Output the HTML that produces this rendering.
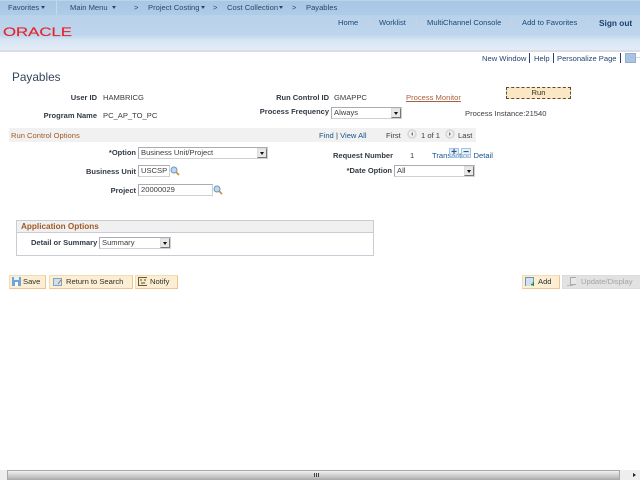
<!DOCTYPE html>
<html><head><meta charset="utf-8"><style>
html,body{margin:0;padding:0;width:640px;height:480px;overflow:hidden;background:#fff}
#p{position:relative;width:640px;height:480px;overflow:hidden;font:7.6px/10px "Liberation Sans",sans-serif;color:#3c3c3c;filter:blur(.3px)}
#p div,#p span.t,#p svg{position:absolute}
.t{white-space:nowrap;margin-top:1px}
.r{text-align:right}
.b{font-weight:bold;color:#333a44;font-size:7.5px}
.n{color:#34465c}
.h{color:#174878}
.l{color:#15548e}
.s{width:1px;background:#c4d4e4;height:9px}
.v{width:1px;background:#303880;height:10px}
.sel,.inp{background:#fff;border:1px solid #a9adb3;border-right-color:#d0d0d0;border-bottom-color:#d0d0d0;box-sizing:border-box;height:12px;line-height:10px;padding-left:2px;color:#3c3c3c}
.ar{box-sizing:border-box;width:10px;height:10px;top:0;right:0;background:#e8e8e8;border:1px solid #777;border-top-color:#ddd;border-left-color:#ddd}
.ar:after{content:"";position:absolute;left:1.5px;top:3px;border:2.5px solid transparent;border-top:3px solid #111;border-bottom:0}
.btn{box-sizing:border-box;top:275px;height:14px;background:#fbeed2;border:1px solid #f3dcb4;border-right-color:#efc58e;border-bottom-color:#efc58e;line-height:12px;color:#303030;white-space:nowrap}
.ic{box-sizing:border-box;left:2px;top:1px;width:9px;height:9px}
</style></head><body><div id="p">

<div style="left:0;top:0;width:640px;height:15px;background:linear-gradient(#cfe0f0 0,#a8c7e4 1px,#aecbe7 14px)"></div>
<div style="left:0;top:15px;width:640px;height:35px;background:linear-gradient(#b9d2ea 0,#bdd5ec 20px,#d8e5f3 25px,#e2ecf6 35px)"></div>
<div style="left:0;top:50px;width:640px;height:2px;background:#dcdce6"></div>
<div style="left:56px;top:1px;width:1px;height:14px;background:#c6d9ec"></div>

<span class="t" style="left:8px;top:2px;color:#2c4765">Favorites</span>
<div style="left:41px;top:6px;border:2.5px solid transparent;border-top:3px solid #2c4765;border-bottom:0"></div>
<span class="t" style="left:70px;top:2px;color:#2c4765">Main Menu</span>
<div style="left:112px;top:6px;border:2.5px solid transparent;border-top:3px solid #2c4765;border-bottom:0"></div>
<span class="t" style="left:134px;top:2px;color:#2c4765">&gt;</span>
<span class="t" style="left:148px;top:2px;color:#2c4765">Project Costing</span>
<div style="left:201px;top:6px;border:2.5px solid transparent;border-top:3px solid #2c4765;border-bottom:0"></div>
<span class="t" style="left:213px;top:2px;color:#2c4765">&gt;</span>
<span class="t" style="left:227px;top:2px;color:#2c4765">Cost Collection</span>
<div style="left:279px;top:6px;border:2.5px solid transparent;border-top:3px solid #2c4765;border-bottom:0"></div>
<span class="t" style="left:292px;top:2px;color:#2c4765">&gt;</span>
<span class="t" style="left:306px;top:2px;color:#2c4765">Payables</span>

<svg style="left:2px;top:25px" width="72" height="13" viewBox="0 0 72 13"><text x="1" y="11" font-family="Liberation Sans" font-size="12" textLength="69" lengthAdjust="spacingAndGlyphs" fill="#e8222a" stroke="#e8222a" stroke-width=".15">ORACLE</text></svg>

<span class="t h" style="left:338px;top:17px">Home</span>
<div class="s" style="left:369px;top:17px"></div>
<span class="t h" style="left:379px;top:17px">Worklist</span>
<div class="s" style="left:416px;top:17px"></div>
<span class="t h" style="left:427px;top:17px">MultiChannel Console</span>
<div class="s" style="left:511px;top:17px"></div>
<span class="t h" style="left:522px;top:17px">Add to Favorites</span>
<div class="s" style="left:587px;top:17px"></div>
<span class="t" style="left:599px;top:17px;font-weight:bold;font-size:8.3px;color:#1c3f6e">Sign out</span>

<span class="t" style="left:482px;top:53px;color:#1f4576">New Window</span>
<div class="v" style="left:529px;top:53px"></div>
<span class="t" style="left:534px;top:53px;color:#1f4576">Help</span>
<div class="v" style="left:553px;top:53px"></div>
<span class="t" style="left:557px;top:53px;color:#1f4576">Personalize Page</span>
<div class="v" style="left:620px;top:53px"></div>
<div style="left:625px;top:53px;width:9px;height:8px;background:#a9c3e2;border:1px solid #92aed0;box-sizing:content-box"></div>
<div style="left:636px;top:57px;width:4px;height:1px;background:#ddd"></div>

<span class="t n" style="left:12px;top:70px;font-size:11.8px;line-height:13px">Payables</span>

<span class="t b r" style="left:30px;width:67px;top:92px">User ID</span>
<span class="t" style="left:103px;top:92px">HAMBRICG</span>
<span class="t b r" style="left:30px;width:67px;top:110px">Program Name</span>
<span class="t" style="left:103px;top:110px">PC_AP_TO_PC</span>
<span class="t b r" style="left:229px;width:100px;top:92px">Run Control ID</span>
<span class="t" style="left:334px;top:92px">GMAPPC</span>
<span class="t" style="left:406px;top:92px;color:#a8603e;text-decoration:underline">Process Monitor</span>
<div style="left:506px;top:87px;width:65px;height:12px;box-sizing:border-box;background:#fbe7c4;border:1px dashed #5a4a30;text-align:center;line-height:9px;color:#303030">Run</div>
<span class="t b r" style="left:229px;width:100px;top:106px">Process Frequency</span>
<div class="sel" style="left:331px;top:107px;width:71px">Always<div class="ar"></div></div>
<span class="t" style="left:465px;top:108px">Process Instance:21540</span>

<div style="left:9px;top:128px;width:467px;height:14px;background:#f1f1f1"></div>
<span class="t" style="left:11px;top:130px;color:#a05a25">Run Control Options</span>
<span class="t" style="left:319px;top:130px;color:#15548e">Find</span>
<span class="t" style="left:336px;top:130px">| <span style="color:#15548e">View All</span></span>
<span class="t" style="left:386px;top:130px">First</span>
<svg style="left:407px;top:129px" width="10" height="10"><circle cx="5" cy="5" r="4.8" fill="#d8d8d8"/><circle cx="5" cy="5" r="3" fill="#f2f2f2"/><path d="M6 3 4 5l2 2z" fill="#777"/></svg>
<span class="t" style="left:421px;top:130px">1 of 1</span>
<svg style="left:445px;top:129px" width="10" height="10"><circle cx="5" cy="5" r="4.8" fill="#d8d8d8"/><circle cx="5" cy="5" r="3" fill="#f2f2f2"/><path d="M4 3l2 2-2 2z" fill="#777"/></svg>
<span class="t" style="left:458px;top:130px">Last</span>

<span class="t b r" style="left:70px;width:66px;top:147px">*Option</span>
<div class="sel" style="left:138px;top:147px;width:130px">Business Unit/Project<div class="ar"></div></div>
<span class="t b r" style="left:70px;width:66px;top:166px">Business Unit</span>
<div class="inp" style="left:138px;top:165px;width:32px">USCSP</div>
<svg style="left:170px;top:166px" width="10" height="10"><circle cx="4" cy="4" r="3" fill="#bcd8f2" stroke="#6f97bc"/><path d="M6 6l3 3" stroke="#c09540" stroke-width="1.7"/></svg>
<span class="t b r" style="left:70px;width:66px;top:185px">Project</span>
<div class="inp" style="left:138px;top:184px;width:75px">20000029</div>
<svg style="left:213px;top:185px" width="10" height="10"><circle cx="4" cy="4" r="3" fill="#bcd8f2" stroke="#6f97bc"/><path d="M6 6l3 3" stroke="#c09540" stroke-width="1.7"/></svg>

<span class="t b" style="left:333px;top:150px">Request Number</span>
<span class="t" style="left:410px;top:150px">1</span>
<span class="t l" style="left:432px;top:150px">Transaction Detail</span>
<div style="left:449px;top:148px;width:10px;height:10px;box-sizing:border-box;background:rgba(196,217,238,.55);border:1px solid #a9c4de;color:#2a5a90;font:bold 10px/8px 'Liberation Sans';text-align:center">+</div>
<div style="left:461px;top:148px;width:10px;height:10px;box-sizing:border-box;background:rgba(214,228,242,.55);border:1px solid #a9c4de;color:#2a5a90;font:bold 10px/8px 'Liberation Sans';text-align:center">−</div>
<span class="t b r" style="left:330px;width:62px;top:165px">*Date Option</span>
<div class="sel" style="left:394px;top:165px;width:81px">All<div class="ar"></div></div>

<div style="left:16px;top:220px;width:358px;height:36px;box-sizing:border-box;border:1px solid #c9ccd4"></div>
<div style="left:17px;top:221px;width:356px;height:11px;background:#f0f0f0;border-bottom:1px solid #c9ccd4"></div>
<span class="t" style="left:21px;top:221px;font-weight:bold;font-size:8.2px;color:#a05a25">Application Options</span>
<span class="t b" style="left:31px;top:237px">Detail or Summary</span>
<div class="sel" style="left:99px;top:237px;width:72px">Summary<div class="ar"></div></div>

<div class="btn" style="left:9px;width:37px;padding-left:13px">Save
<svg class="ic" width="9" height="9"><rect width="9" height="9" fill="#6fa5d8"/><rect x="2" y="0" width="5" height="3" fill="#e8f0f8"/><rect x="3" y="5" width="3" height="4" fill="#fff"/></svg></div>
<div class="btn" style="left:49px;width:84px;padding-left:16px">Return to Search
<svg class="ic" style="left:3px" width="11" height="10"><rect x=".5" y="1.5" width="8" height="7" fill="#cfe0f2" stroke="#6f94b8" stroke-width=".8"/><path d="M5 7 8 3M9 3l1 3" stroke="#a5803a" stroke-width="1" fill="none"/></svg></div>
<div class="btn" style="left:135px;width:43px;padding-left:14px">Notify
<svg class="ic" width="10" height="9"><rect x=".5" y=".5" width="9" height="8" fill="#f8e9c6" stroke="#6a5a40"/><path d="M2 3h2M6 3h2M3 6h4" stroke="#5a4a30"/></svg></div>
<div class="btn" style="left:522px;width:38px;padding-left:15px">Add
<svg class="ic" width="11" height="10"><rect x=".5" y=".5" width="8" height="9" fill="#cfe0f2" stroke="#6f94b8"/><path d="M6 7.5h5M8.5 5v5" stroke="#2f8f3a" stroke-width="1.5"/></svg></div>
<div class="btn" style="left:562px;width:80px;padding-left:18px;background:#e2e2e2;border-color:#dcdcdc;color:#a4a4a4">Update/Display
<svg class="ic" style="left:4px" width="11" height="10"><rect x="3.5" y=".5" width="6" height="7" fill="#e8e8e8" stroke="#aaa"/><path d="M0 9h6" stroke="#aaa" stroke-width="1.5"/></svg></div>

<div style="left:0;top:470px;width:640px;height:10px;background:#eee"></div>
<div style="left:7px;top:470px;width:613px;height:10px;box-sizing:border-box;border:1px solid #a8a8a8;border-bottom:0;background:linear-gradient(#f2f2f2,#dcdcdc 30%,#c2c2c2 70%,#a8a8a8)"></div>
<div style="left:314px;top:473px;width:1px;height:4px;background:#444;box-shadow:2px 0 #444,4px 0 #444"></div>
<div style="left:633px;top:473px;border:2px solid transparent;border-left:3px solid #222;border-right:0"></div>
</div></body></html>
